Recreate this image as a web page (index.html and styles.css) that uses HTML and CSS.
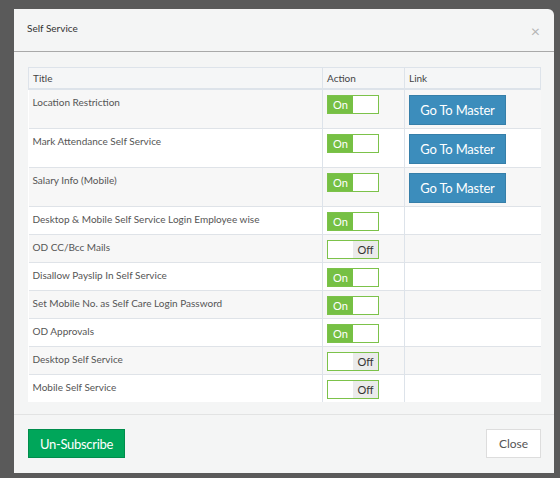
FILE: index.html
```html
<!DOCTYPE html>
<html>
<head>
  <meta charset="UTF-8">
  <title>Self Service</title>
  <link rel="stylesheet" href="styles.css">
</head>
<body>
  <div class="overlay">
    <div class="modal">
      <div class="modal-header">
        <span class="modal-title">Self Service</span>
        <span class="close-x">&times;</span>
      </div>
      <div class="modal-body">
        <table class="grid">
          <thead>
            <tr>
              <th class="col-title">Title</th>
              <th class="col-action">Action</th>
              <th class="col-link">Link</th>
            </tr>
          </thead>
          <tbody>
            <tr>
              <td>Location Restriction</td>
              <td><span class="switch on"><span class="knob-on">On</span><span class="blank"></span></span></td>
              <td><button class="master-btn">Go To Master</button></td>
            </tr>
            <tr>
              <td>Mark Attendance Self Service</td>
              <td><span class="switch on"><span class="knob-on">On</span><span class="blank"></span></span></td>
              <td><button class="master-btn">Go To Master</button></td>
            </tr>
            <tr>
              <td>Salary Info (Mobile)</td>
              <td><span class="switch on"><span class="knob-on">On</span><span class="blank"></span></span></td>
              <td><button class="master-btn">Go To Master</button></td>
            </tr>
            <tr>
              <td>Desktop &amp; Mobile Self Service Login Employee wise</td>
              <td><span class="switch on"><span class="knob-on">On</span><span class="blank"></span></span></td>
              <td></td>
            </tr>
            <tr>
              <td>OD CC/Bcc Mails</td>
              <td><span class="switch off"><span class="blank"></span><span class="knob-off">Off</span></span></td>
              <td></td>
            </tr>
            <tr>
              <td>Disallow Payslip In Self Service</td>
              <td><span class="switch on"><span class="knob-on">On</span><span class="blank"></span></span></td>
              <td></td>
            </tr>
            <tr>
              <td>Set Mobile No. as Self Care Login Password</td>
              <td><span class="switch on"><span class="knob-on">On</span><span class="blank"></span></span></td>
              <td></td>
            </tr>
            <tr>
              <td>OD Approvals</td>
              <td><span class="switch on"><span class="knob-on">On</span><span class="blank"></span></span></td>
              <td></td>
            </tr>
            <tr>
              <td>Desktop Self Service</td>
              <td><span class="switch off"><span class="blank"></span><span class="knob-off">Off</span></span></td>
              <td></td>
            </tr>
            <tr>
              <td>Mobile Self Service</td>
              <td><span class="switch off"><span class="blank"></span><span class="knob-off">Off</span></span></td>
              <td></td>
            </tr>
          </tbody>
        </table>
      </div>
      <div class="modal-footer">
        <button class="unsub-btn">Un-Subscribe</button>
        <button class="close-btn">Close</button>
      </div>
    </div>
  </div>
</body>
</html>
```

FILE: styles.css
```css
html, body {
  margin: 0;
  padding: 0;
}
body {
  width: 560px;
  height: 478px;
  overflow: hidden;
  background-color: #5a5a5a;
  font-family: Lato, "Open Sans", sans-serif;
  color: #555;
}
.overlay {
  padding: 9px 6px 0 14px;
}
.modal {
  width: 540px;
  background-color: #f4f5f5;
  border-radius: 0 6px 0 0;
}
.modal-header {
  height: 42px;
  border-bottom: 1px solid #a9a9a9;
  display: flex;
  align-items: flex-start;
  justify-content: space-between;
  padding: 0 14px 0 13px;
}
.modal-title {
  font-size: 10px;
  color: #333;
  margin-top: 13px;
}
.close-x {
  font-size: 16px;
  color: #b5b5b5;
  margin-top: 12px;
}
.modal-body {
  padding: 15px 13px 12px 14px;
}
.grid {
  width: 513px;
  border-collapse: collapse;
  table-layout: fixed;
  background-color: #fff;
  font-size: 10px;
}
.grid th {
  text-align: left;
  font-weight: normal;
  color: #444;
  height: 20px;
  padding: 0 4px;
  background-color: #f5f6f7;
  border: 1px solid #dde3ea;
  border-bottom-width: 2px;
}
.col-title { width: 285px; }
.col-action { width: 73px; }
.grid td {
  vertical-align: top;
  padding: 5px 4px 3px 4px;
  line-height: 14px;
  border-top: 1px solid #dfe3e8;
  border-left: 1px solid #dde3ea;
  border-right: 1px solid #dde3ea;
  color: #555;
}
.grid td:first-child {
  border-left: none;
}
.grid td:last-child {
  border-right: none;
}
.grid tbody tr:nth-child(odd) td {
  background-color: #f7f7f7;
}
.switch {
  display: flex;
  width: 50px;
  height: 17px;
  border: 1px solid #7cc24a;
  font-size: 11px;
}
.switch span {
  width: 25px;
  display: flex;
  align-items: center;
  justify-content: center;
}
.knob-on {
  background-color: #76c044;
  color: #fff;
}
.knob-off {
  background-color: #ebebeb;
  color: #333;
}
.blank {
  background-color: #fff;
}
button {
  font-family: Lato, "Open Sans", sans-serif;
  cursor: pointer;
}
.master-btn {
  display: block;
  width: 97px;
  height: 30px;
  background-color: #3c8dbc;
  border: 1px solid #367fa9;
  color: #fff;
  font-size: 13px;
  padding: 0;
  letter-spacing: -0.2px;
}
.modal-footer {
  border-top: 1px solid #e2e3e3;
  padding: 14px 13px 15px 14px;
  display: flex;
  justify-content: space-between;
}
.unsub-btn {
  width: 97px;
  height: 29px;
  background-color: #00a65a;
  border: 1px solid #008d4c;
  color: #fff;
  font-size: 13px;
  padding: 0;
  letter-spacing: -0.3px;
}
.close-btn {
  width: 55px;
  height: 29px;
  background-color: #fff;
  border: 1px solid #ddd;
  color: #555;
  font-size: 12px;
  padding: 0;
}
```
